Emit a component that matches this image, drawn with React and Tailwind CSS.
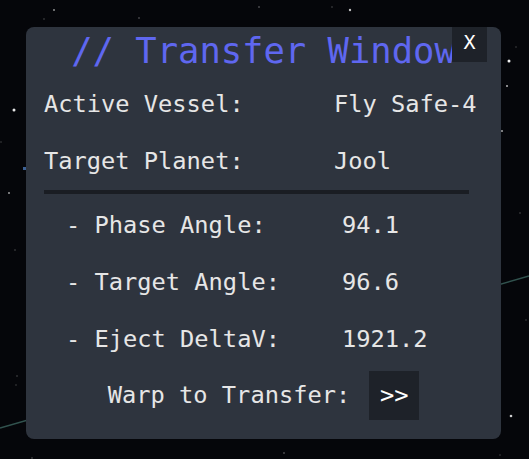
import React from "react";

const stars = [
  [54, 10, 1, 0.55], [139, 18, 0.8, 0.4], [259, 7, 0.8, 0.45], [332, 7, 0.7, 0.35],
  [350, 10, 1.2, 0.75], [44, 19, 0.7, 0.35], [509, 61, 1.5, 0.95], [507, 86, 1, 0.7],
  [502, 131, 1.1, 0.6], [516, 47, 0.7, 0.3], [14, 110, 1.5, 0.9], [9, 193, 1, 0.6],
  [15, 250, 0.7, 0.35], [17, 376, 0.7, 0.35], [520, 213, 0.7, 0.35], [526, 320, 0.7, 0.3],
  [511, 416, 1.3, 0.8], [16, 385, 0.7, 0.3], [284, 453, 0.8, 0.45], [32, 458, 0.7, 0.4],
  [1, 142, 0.7, 0.3], [500, 455, 0.7, 0.3],
];

function StarField() {
  return (
    <svg className="absolute inset-0" width="529" height="459" viewBox="0 0 529 459">
      <line x1="0" y1="428" x2="529" y2="276" stroke="#3d6660" strokeWidth="1.6" opacity="0.8" />
      {stars.map(([x, y, r, o], i) => (
        <circle key={i} cx={x} cy={y} r={r} fill="#ffffff" opacity={o} />
      ))}
      <rect x="23" y="167" width="3" height="3" fill="#4a78b8" opacity="0.8" />
    </svg>
  );
}

const mainRows = [
  { label: "Active Vessel:", value: "Fly Safe-4" },
  { label: "Target Planet:", value: "Jool" },
];

const subRows = [
  { label: "- Phase Angle:", value: "94.1" },
  { label: "- Target Angle:", value: "96.6" },
  { label: "- Eject DeltaV:", value: "1921.2" },
];

export default function App() {
  return (
    <div className="relative w-[529px] h-[459px] overflow-hidden bg-[#05060a] pt-[27px] pl-[26px] font-['DejaVu_Sans_Mono',monospace] text-[#e6e6e6]">
      <StarField />
      <div className="relative w-[475px] h-[412px] rounded-lg bg-[#2e343e] overflow-hidden">
        <h1 className="h-[48px] text-center text-[35.5px] leading-[48px] text-[#5f67f0] whitespace-nowrap">
          // Transfer Window
        </h1>
        <div className="absolute top-0 right-[14px] w-[35px] h-[35px] bg-[#1e2229] flex justify-center items-start pt-[5px] text-[20px] leading-none text-white">
          X
        </div>

        <div className="mt-[1px] pl-[18px] text-[23.7px] leading-[57px] whitespace-pre">
          {mainRows.map((row) => (
            <div key={row.label} className="grid grid-cols-[290px_1fr]">
              <span>{row.label}</span>
              <span>{row.value}</span>
            </div>
          ))}
        </div>

        <div className="ml-[18px] w-[425px] h-[4px] bg-[#1a1d23]" />

        <div className="mt-[3px] pl-[40px] text-[23.7px] leading-[57px] whitespace-pre">
          {subRows.map((row) => (
            <div key={row.label} className="grid grid-cols-[276px_1fr]">
              <span>{row.label}</span>
              <span>{row.value}</span>
            </div>
          ))}
        </div>

        <div className="mt-[3px] flex justify-center items-center gap-[19px] text-[23.7px] whitespace-pre">
          <span>Warp to Transfer:</span>
          <button className="w-[50px] h-[49px] bg-[#1e2229] flex items-center justify-center text-white">
            &gt;&gt;
          </button>
        </div>
      </div>
    </div>
  );
}
